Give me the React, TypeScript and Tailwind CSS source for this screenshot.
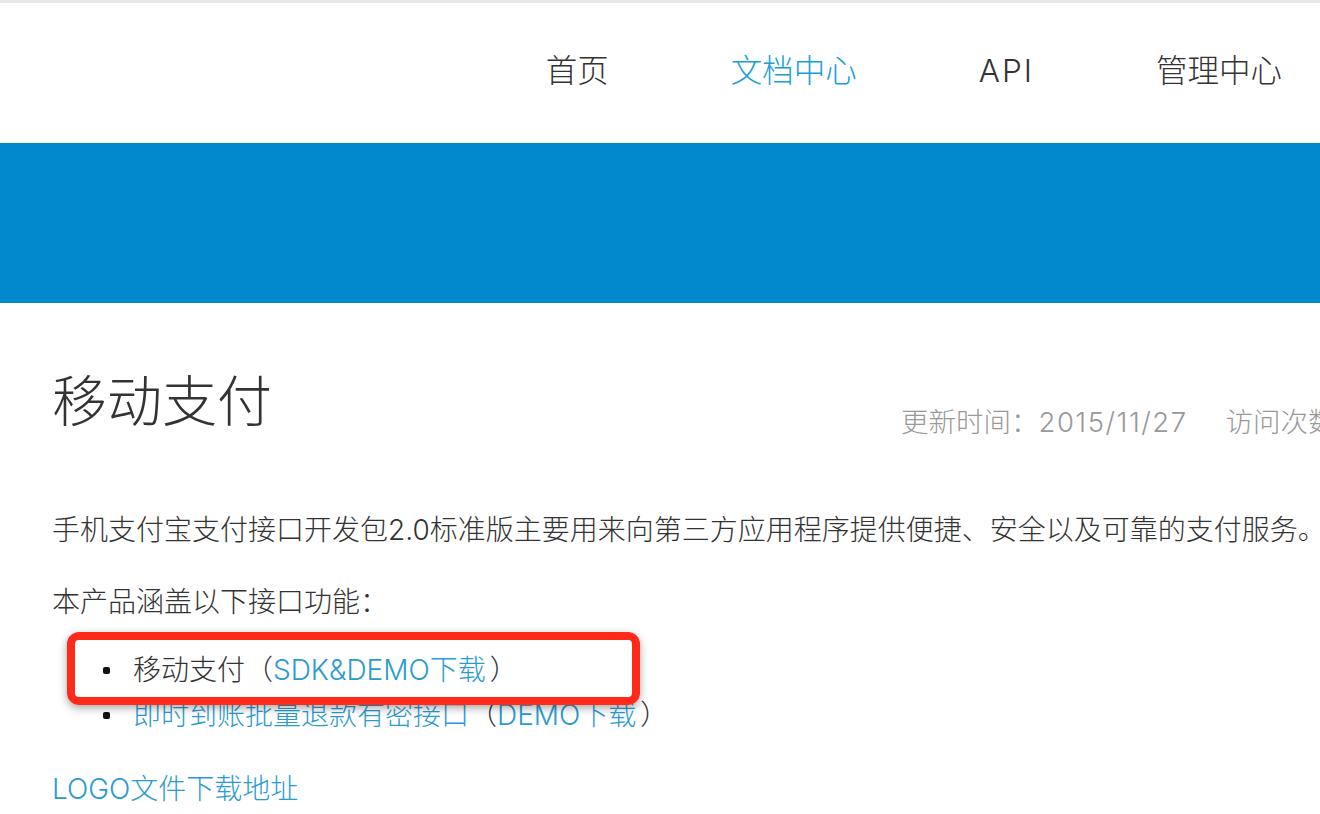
import React from 'react';

const font = { fontFamily: 'Inter, "Noto Sans CJK SC", sans-serif' };

function Header() {
  return (
    <div>
      <div className="h-[3px] bg-[#e6e6e6]" />
      <nav className="h-[140px] flex items-center justify-end gap-[122px] pr-[38px] pb-[4px] text-[31.5px] font-light text-[#333]">
        <a>首页</a>
        <a className="text-[#1aa0d8]">文档中心</a>
        <a className="tracking-[2px]">API</a>
        <a>管理中心</a>
      </nav>
      <div className="h-[160px] bg-[#0288cc]" />
    </div>
  );
}

function Bullet() {
  return <span className="w-[7px] h-[7px] rounded-[2px] bg-[#111] mr-[23px]" />;
}

function App() {
  return (
    <div className="w-[1320px] h-[814px] overflow-hidden bg-white" style={font}>
      <Header />
      <main className="px-[52px] pt-[71px] text-[#333]">
        <div className="flex items-end whitespace-nowrap">
          <h1 className="w-[849px] shrink-0 text-[55px] leading-[55px] font-light">移动支付</h1>
          <div className="text-[27.5px] leading-[30px] font-light text-[#999] mb-[-8px]">
            更新时间：<span className="tracking-[1.5px]">2015/11/27</span>
            <span className="ml-[38px]">访问次数：12345</span>
          </div>
        </div>
        <p className="mt-[80px] text-[28px] leading-[42px] font-light whitespace-nowrap">
          手机支付宝支付接口开发包2.0标准版主要用来向第三方应用程序提供便捷、安全以及可靠的支付服务。
        </p>
        <p className="mt-[30px] text-[28px] leading-[42px] font-light">本产品涵盖以下接口功能：</p>
        <ul className="mt-[25px] text-[28px] leading-[45px] font-light">
          <li className="relative flex items-center pl-[51px]">
            <Bullet />
            <span>移动支付</span>
            <span>（</span>
            <a className="text-[#2a9bd2]">SDK&amp;DEMO下载</a>
            <span className="ml-[4px]">）</span>
            <div className="absolute left-[15px] top-[-16px] w-[573px] h-[73px] border-[8px] border-[#ff2a1a] rounded-[12px] shadow-[0_3px_8px_rgba(0,0,0,0.35)]" />
          </li>
          <li className="flex items-center pl-[51px]">
            <Bullet />
            <a className="text-[#2a9bd2]">即时到账批量退款有密接口</a>
            <span>（</span>
            <a className="text-[#2a9bd2]">DEMO下载</a>
            <span className="ml-[4px]">）</span>
          </li>
        </ul>
        <a className="block mt-[30px] text-[28px] leading-[42px] font-light text-[#2a9bd2]">LOGO文件下载地址</a>
      </main>
    </div>
  );
}

export default App;
